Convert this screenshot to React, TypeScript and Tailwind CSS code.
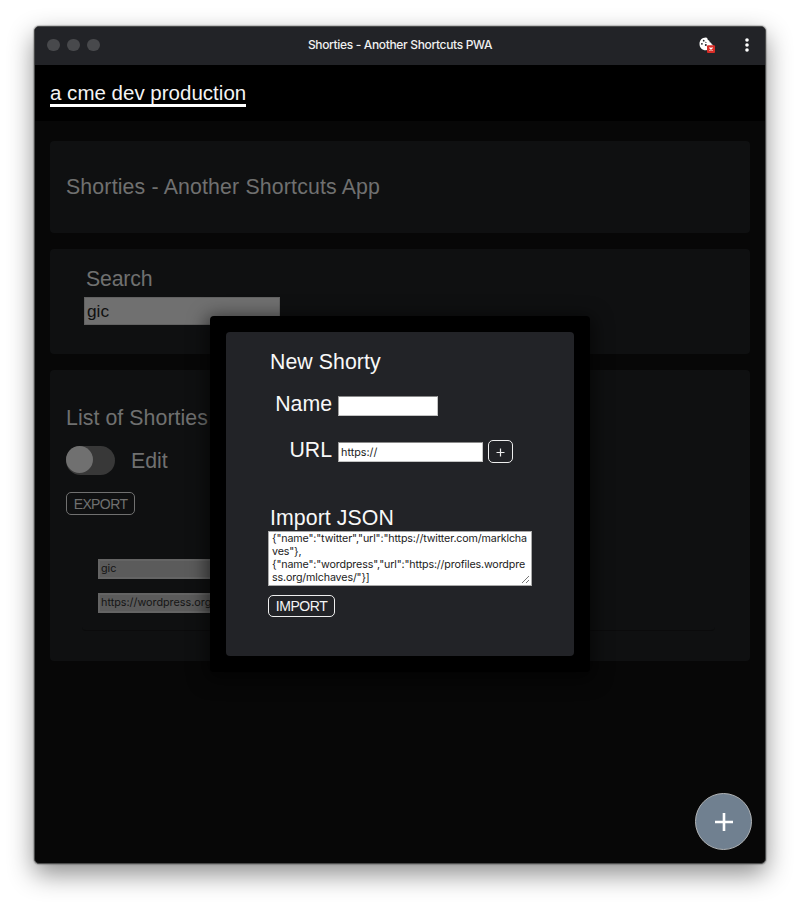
import type { ReactNode } from "react";

const sans = "font-['Liberation_Sans',sans-serif]";
const ui = "font-['Inter',sans-serif]";

function Card({ className, children }: { className: string; children: ReactNode }) {
  return <section className={`rounded-[4px] bg-[#0f1011] ${className}`}>{children}</section>;
}

function TitleBar() {
  return (
    <header className="flex h-[38px] items-center bg-[#222327] px-[12px] pb-[2px]">
      <div className="flex w-[120px] gap-[7.5px]">
        <i className="size-[12.5px] rounded-full bg-[#48494c]" />
        <i className="size-[12.5px] rounded-full bg-[#48494c]" />
        <i className="size-[12.5px] rounded-full bg-[#48494c]" />
      </div>
      <h1 className={`${ui} flex-1 text-center text-[12px] font-medium leading-[16px] tracking-[-0.34px] whitespace-nowrap text-[#f0f0f0]`}>
        Shorties - Another Shortcuts PWA
      </h1>
      <div className="flex w-[120px] items-center justify-end">
        <svg width="18" height="18" viewBox="0 0 18 18" className="mr-[28.500px]">
          <path d="M7.800 1.500C4 1.500 1.500 4.300 1.500 7.900c0 3.500 2.600 6.300 6.300 6.300L9.500 14V10h5.800c0-1.500-1.100-1.600-1.700-1.800.1-1.300-.9-2-1.900-2 .1-1.300-1-2.100-2-2.100.3-1.100-.4-2.600-1.900-2.600z" fill="#fff" />
          <circle cx="5.700" cy="4.700" r=".9" fill="#222327" />
          <circle cx="7.900" cy="6.300" r=".6" fill="#222327" />
          <circle cx="3.900" cy="7.800" r=".9" fill="#222327" />
          <circle cx="7.800" cy="9" r="1" fill="#222327" />
          <rect x="9" y="9.300" width="8" height="7.600" rx="1" fill="#d92d27" />
          <path d="M11.500 11.500l3 3M14.500 11.500l-3 3" stroke="#fff" strokeWidth="1.200" />
        </svg>
        <svg width="4" height="14" viewBox="0 0 4 14" className="mr-[4.500px]" fill="#fff">
          <circle cx="2" cy="2" r="1.800" />
          <circle cx="2" cy="7" r="1.800" />
          <circle cx="2" cy="12" r="1.800" />
        </svg>
      </div>
    </header>
  );
}

function NewShortyDialog() {
  return (
    <div role="dialog" className="absolute left-[175px] top-[289px] h-[356px] w-[380px] rounded-[4px] bg-black p-4 shadow-[0_4px_18px_4px_rgba(0,0,0,0.55)]">
      <div className="h-[324px] rounded-[4px] bg-[#222327] pl-[42px] pt-[16px] text-[21.300px] text-[#f8f8f8]">
        <h2 className="pl-[2px] leading-[28px] tracking-[0.060px]">New Shorty</h2>
        <div className="mt-[14px] flex h-[28px] items-center">
          <label className="w-[64px] text-right leading-[28px]">Name</label>
          <div className="ml-[6px] mt-[4px] h-[20px] w-[100px] border border-[#c4c4c4] border-t-[#8a8a8a] border-l-[#a0a0a0] bg-white" />
        </div>
        <div className="mt-[18px] flex h-[28px] items-center">
          <label className="w-[64px] text-right leading-[28px]">URL</label>
          <div className={`${ui} ml-[6px] mt-[4px] flex h-[20px] w-[145px] items-center border border-[#c4c4c4] border-t-[#8a8a8a] border-l-[#a0a0a0] bg-white pt-[3px] pl-[2px] text-[10.800px] text-[#222]`}>https://</div>
          <button className="ml-[5px] mt-[3px] flex h-[23px] w-[25px] items-center justify-center rounded-[5px] border-[1.500px] border-[#eee] bg-[#222327]">
            <svg width="9" height="9" viewBox="0 0 9 9" className="mt-[2px]"><path d="M4.500 .5v8M.5 4.500h8" stroke="#eee" strokeWidth="1.200" /></svg>
          </button>
        </div>
        <h2 className="mt-[40px] pl-[2px] leading-[28px] tracking-[0.080px]">Import JSON</h2>
        <div className={`${ui} relative -mt-px h-[55px] w-[264px] border border-[#aaa] bg-white px-[3px] text-[10.700px] leading-[13px] tracking-[-0.135px] text-[#222]`}>
          <div className="whitespace-nowrap">
            <div>{'{"name":"twitter","url":"https://twitter.com/marklcha'}</div>
            <div>{'ves"},'}</div>
            <div>{'{"name":"wordpress","url":"https://profiles.wordpre'}</div>
            <div>{'ss.org/mlchaves/"}]'}</div>
          </div>
          <svg width="9" height="9" viewBox="0 0 9 9" className="absolute bottom-px right-px"><path d="M1 8L8 1M5 8l3-3" stroke="#666" strokeWidth=".9" /></svg>
        </div>
        <button className="mt-[9px] flex h-[22px] w-[67px] items-center justify-center rounded-[5px] border-[1.500px] border-[#eee] text-[14px] leading-none tracking-[-0.450px] text-[#f4f4f4]">IMPORT</button>
      </div>
    </div>
  );
}

export default function App() {
  return (
    <div className={`${sans} h-[906px] w-[800px] overflow-hidden bg-white pl-[34px] pt-[26px]`}>
      <div className="relative h-[838px] w-[732px] rounded-[5px] border border-[#4a4b4b] bg-[#070707] shadow-[0_0_1px_1px_rgba(0,0,0,0.2),0_10px_26px_rgba(0,0,0,0.45)]">
        <div className="h-full overflow-hidden rounded-[4px]">
          <TitleBar />
          <nav className="h-[56px] bg-black pl-[15px] pt-[16px]">
            <a className="inline-block h-[26px] border-b-[3px] border-white text-[20.500px] leading-[24px] tracking-[0.010px] whitespace-nowrap text-[#f4f4f4]">a cme dev production</a>
          </nav>
          <main className="flex flex-col gap-4 px-[15px] pt-[20px] text-[21.300px] text-[#707070]">
            <Card className="flex h-[92px] items-center pl-[16px]">
              <h2 className="leading-[28px] tracking-[0.160px]">Shorties - Another Shortcuts App</h2>
            </Card>
            <Card className="h-[105px] pl-[34px] pt-[16px]">
              <label className="block pl-[2px] leading-[28px] tracking-[-0.200px]">Search</label>
              <div className="mt-[4px] flex h-[28px] w-[196px] items-center border border-[#626262] bg-[#707070] pt-px pl-[2px] text-[17.300px] text-[#101010]">gic</div>
            </Card>
            <Card className="h-[291px] pl-[16px] pt-[34px]">
              <h2 className="leading-[28px] tracking-[0.070px]">List of Shorties</h2>
              <div className="mt-[14px] flex h-[29px] items-center">
                <div className="h-[29px] w-[49px] rounded-full bg-[#383838]">
                  <div className="size-[27px] rounded-full bg-[#707070]" />
                </div>
                <span className="ml-[16px] leading-[28px]">Edit</span>
              </div>
              <button className="mt-[17px] flex h-[23px] w-[69px] items-center justify-center rounded-[5px] border-[1.500px] border-[#707070] text-[14px] leading-none tracking-[-0.600px]">EXPORT</button>
              <div className={`${ui} ml-[16px] mt-[28px] flex h-[88px] w-[633px] flex-col gap-[14px] rounded-[4px] border-b border-[#0b0b0c] pl-[16px] pt-[16px] text-[10.800px] text-[#151515]`}>
                <div className="flex h-[20px] w-[146px] items-center border-2 border-[#646464] bg-[#5b5b5b] pt-px pl-[1px]">gic</div>
                <div className="flex h-[20px] w-[146px] items-center overflow-hidden border-2 border-[#646464] bg-[#5b5b5b] pt-px pl-[1px] whitespace-nowrap">https://wordpress.org/</div>
              </div>
            </Card>
          </main>
        </div>
        <NewShortyDialog />
        <button className="absolute left-[660px] top-[766px] flex size-[57px] items-center justify-center rounded-full border-[1.500px] border-[#b0b3b5] bg-[#708090]">
          <svg width="18" height="18" viewBox="0 0 18 18"><path d="M9 0v18M0 9h18" stroke="#fff" strokeWidth="2.600" /></svg>
        </button>
      </div>
    </div>
  );
}
